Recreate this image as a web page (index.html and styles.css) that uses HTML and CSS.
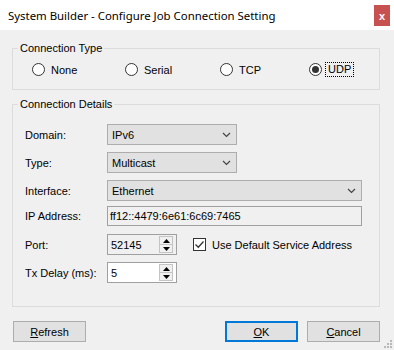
FILE: index.html
```html
<!DOCTYPE html>
<html lang="en">
  <head>
    <meta charset="UTF-8" />
    <title>System Builder - Configure Job Connection Setting</title>
    <link rel="stylesheet" href="styles.css">
  </head>
  <body>
    <div class="titlebar">
      <span class="title">System Builder - Configure Job Connection Setting</span>
      <div class="close">x</div>
    </div>
    <div class="content">
      <fieldset class="group">
        <legend>Connection Type</legend>
        <div class="radios">
          <label class="radio"><span class="dot"></span><span>None</span></label>
          <label class="radio"><span class="dot"></span><span>Serial</span></label>
          <label class="radio"><span class="dot"></span><span>TCP</span></label>
          <label class="radio checked"><span class="dot"></span><span class="focus">UDP</span></label>
        </div>
      </fieldset>

      <fieldset class="group group-details">
        <legend>Connection Details</legend>
        <div class="rows">
          <div class="row">
            <span class="lbl">Domain:</span>
            <div class="combo short">
              <span>IPv6</span>
              <svg width="9" height="6" viewBox="0 0 9 6"><path d="M1 1l3.5 3.5L8 1" fill="none" stroke="#444" stroke-width="1.2"/></svg>
            </div>
          </div>
          <div class="row">
            <span class="lbl">Type:</span>
            <div class="combo short">
              <span>Multicast</span>
              <svg width="9" height="6" viewBox="0 0 9 6"><path d="M1 1l3.5 3.5L8 1" fill="none" stroke="#444" stroke-width="1.2"/></svg>
            </div>
          </div>
          <div class="row">
            <span class="lbl">Interface:</span>
            <div class="combo wide">
              <span>Ethernet</span>
              <svg width="9" height="6" viewBox="0 0 9 6"><path d="M1 1l3.5 3.5L8 1" fill="none" stroke="#444" stroke-width="1.2"/></svg>
            </div>
          </div>
          <div class="row row-ip">
            <span class="lbl">IP Address:</span>
            <div class="textbox wide readonly">ff12::4479:6e61:6c69:7465</div>
          </div>
          <div class="row">
            <span class="lbl">Port:</span>
            <div class="spin readonly">
              <span class="val">52145</span>
              <div class="arrows">
                <span class="up"><svg width="7" height="4" viewBox="0 0 7 4"><path d="M0 4L3.5 0L7 4z" fill="#000"/></svg></span>
                <span class="down"><svg width="7" height="4" viewBox="0 0 7 4"><path d="M0 0L3.5 4L7 0z" fill="#000"/></svg></span>
              </div>
            </div>
            <label class="check">
              <span class="box"><svg width="11" height="11" viewBox="0 0 11 11"><path d="M1.5 5.5l2.8 2.8L9.5 2.5" fill="none" stroke="#333" stroke-width="1.3"/></svg></span>
              <span>Use Default Service Address</span>
            </label>
          </div>
          <div class="row">
            <span class="lbl">Tx Delay (ms):</span>
            <div class="spin">
              <span class="val">5</span>
              <div class="arrows">
                <span class="up"><svg width="7" height="4" viewBox="0 0 7 4"><path d="M0 4L3.5 0L7 4z" fill="#000"/></svg></span>
                <span class="down"><svg width="7" height="4" viewBox="0 0 7 4"><path d="M0 0L3.5 4L7 0z" fill="#000"/></svg></span>
              </div>
            </div>
          </div>
        </div>
      </fieldset>

      <div class="buttons">
        <div class="btn"><u>R</u>efresh</div>
        <div class="spacer"></div>
        <div class="btn default"><u>O</u>K</div>
        <div class="btn"><u>C</u>ancel</div>
      </div>
    </div>
    <svg class="grip" width="8" height="8" viewBox="0 0 8 8">
      <rect x="6" y="0" width="2" height="2" fill="#b8b8b8"/>
      <rect x="3" y="3" width="2" height="2" fill="#b8b8b8"/>
      <rect x="6" y="3" width="2" height="2" fill="#b8b8b8"/>
      <rect x="0" y="6" width="2" height="2" fill="#b8b8b8"/>
      <rect x="3" y="6" width="2" height="2" fill="#b8b8b8"/>
      <rect x="6" y="6" width="2" height="2" fill="#b8b8b8"/>
    </svg>
  </body>
</html>
```

FILE: styles.css
```css
* {
  margin: 0;
  padding: 0;
  box-sizing: border-box;
}
html,
body {
  width: 100%;
  height: 100%;
  overflow: hidden;
}
body {
  position: relative;
  background: #f0f0f0;
  font-family: "Liberation Sans", Arial, sans-serif;
  font-size: 11px;
  color: #000;
}

/* title bar */
.titlebar {
  height: 30px;
  background: #fff;
  display: flex;
  align-items: center;
  justify-content: space-between;
  padding-left: 8px;
  padding-right: 4px;
}
.title {
  font-family: "Noto Sans", sans-serif;
  font-size: 11.4px;
  color: #000;
}
.close {
  width: 16px;
  height: 21px;
  background: #c75050;
  color: #fff;
  font-weight: bold;
  font-size: 11px;
  display: flex;
  align-items: center;
  justify-content: center;
  margin-top: 1px;
}

.content {
  padding: 0 14px 0 12px;
}

/* group boxes */
.group {
  border: 1px solid #dcdcdc;
  margin-top: 12px;
}
.group legend {
  margin-left: 5px;
  padding: 0 2px;
  line-height: 13px;
}
.group-details {
  margin-top: 8px;
}

/* radios */
.radios {
  display: grid;
  grid-template-columns: 93px 95px 89px auto;
  padding: 7px 0 12px 19px;
}
.radio {
  display: flex;
  align-items: center;
  gap: 6px;
  height: 15px;
}
.radio .dot {
  width: 13px;
  height: 13px;
  border: 1px solid #333;
  border-radius: 50%;
  background: #fff;
  display: flex;
  align-items: center;
  justify-content: center;
}
.radio.checked .dot::after {
  content: "";
  width: 7px;
  height: 7px;
  border-radius: 50%;
  background: #333;
}
.focus {
  outline: 1px dotted #000;
  padding: 0 2px 1px 2px;
  margin-left: -2px;
}

/* detail rows */
.rows {
  display: flex;
  flex-direction: column;
  gap: 7px;
  padding: 13px 0 23px 12px;
}
.row {
  display: flex;
  align-items: center;
}
.row-ip {
  margin-top: -2px;
  margin-bottom: 1px;
}
.lbl {
  width: 82px;
}
.combo {
  height: 21px;
  background: #e1e1e1;
  border: 1px solid #adadad;
  display: flex;
  align-items: center;
  justify-content: space-between;
  padding: 0 5px 0 4px;
}
.short {
  width: 130px;
}
.wide {
  width: 255px;
}
.textbox {
  height: 20px;
  border: 1px solid #a0a0a0;
  background: #fff;
  display: flex;
  align-items: center;
  padding-left: 2px;
}
.readonly {
  background: #f0f0f0;
}
.spin {
  width: 70px;
  height: 21px;
  border: 1px solid #a0a0a0;
  background: #fff;
  display: flex;
  align-items: center;
  justify-content: space-between;
  padding: 0 3px 0 3px;
}
.spin.readonly {
  background: #f0f0f0;
}
.arrows {
  display: flex;
  flex-direction: column;
  border: 1px solid #c4c4c4;
  width: 14px;
  height: 17px;
}
.arrows span {
  flex: 1;
  display: flex;
  align-items: center;
  justify-content: center;
  background: #f0f0f0;
}
.arrows .down {
  border-top: 1px solid #c4c4c4;
}

/* checkbox */
.check {
  display: flex;
  align-items: center;
  gap: 6px;
  margin-left: 16px;
}
.check .box {
  width: 13px;
  height: 13px;
  border: 1px solid #333;
  background: #fff;
  display: flex;
  align-items: center;
  justify-content: center;
}

/* bottom buttons */
.buttons {
  display: flex;
  gap: 9px;
  margin-top: 14px;
  padding-left: 1px;
}
.spacer {
  flex: 1;
}
.btn {
  width: 73px;
  height: 21px;
  background: #e1e1e1;
  border: 1px solid #adadad;
  display: flex;
  align-items: center;
  justify-content: center;
}
.btn.default {
  border: 2px solid #0078d7;
}

.grip {
  position: absolute;
  right: 2px;
  bottom: 2px;
}
```
